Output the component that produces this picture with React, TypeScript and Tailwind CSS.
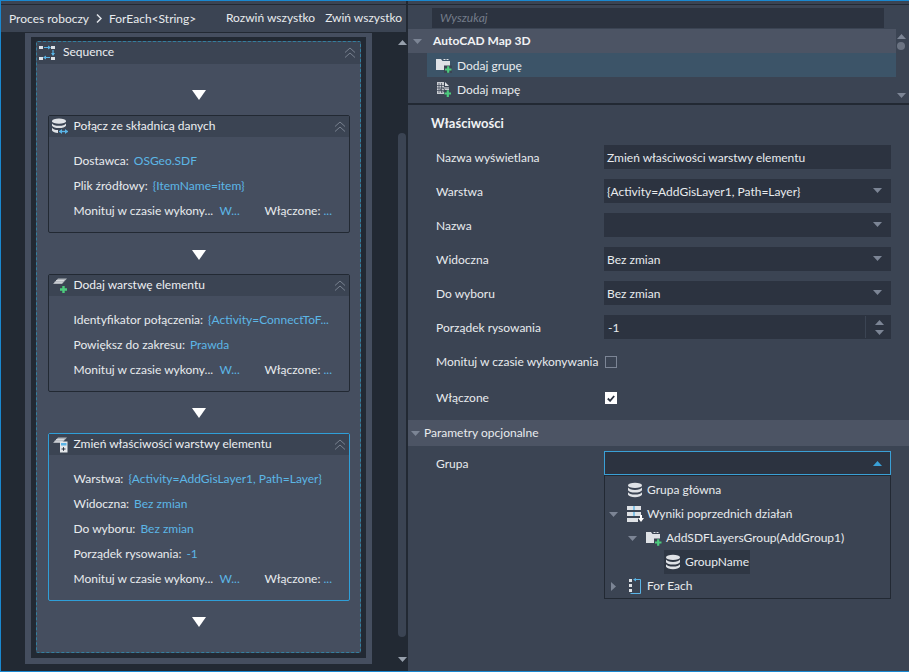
import React from "react";

const DoubleChevron = () => (
  <svg width="12" height="12" viewBox="0 0 12 12" fill="none" stroke="#78818f" strokeWidth="1">
    <path d="M1 5.5L6 1l5 4.5M1 10.5L6 6l5 4.5" />
  </svg>
);

const Down = ({ color = "#7c8595" }: { color?: string }) => (
  <svg width="9" height="5" viewBox="0 0 9 5"><path d="M0 0h9L4.5 5z" fill={color} /></svg>
);
const Up = ({ color = "#7c8595" }: { color?: string }) => (
  <svg width="9" height="5" viewBox="0 0 9 5"><path d="M0 5h9L4.5 0z" fill={color} /></svg>
);

const Flow = () => (
  <svg width="14" height="10" viewBox="0 0 14 10" className="shrink-0"><path d="M0 0h14L7 10z" fill="#fff" /></svg>
);

const SeqIcon = () => (
  <svg width="16" height="16" viewBox="0 0 16 16" className="shrink-0">
    <g fill="#dde1e6">
      <rect x="0" y="1" width="4" height="3" /><rect x="12" y="1" width="4" height="3" />
      <rect x="0" y="12" width="4" height="3" /><rect x="12" y="12" width="4" height="3" />
    </g>
    <path d="M5 2.5h5M11 12.5h-6M14 5v5" stroke="#5ab4e6" strokeWidth="1.2" fill="none" />
    <path d="M9 0.5l3 2-3 2zM7 10.5l-3 2 3 2zM12 8h4l-2 3z" fill="#5ab4e6" />
  </svg>
);

const Db = ({ w = 16 }: { w?: number }) => (
  <svg width={w} height={w} viewBox="0 0 16 16" className="shrink-0">
    <ellipse cx="8" cy="3.4" rx="7" ry="2.6" fill="#dfe2e6" />
    <path d="M1 5.6c1 1.6 3.5 2.3 7 2.3s6-.7 7-2.3v2.6c-1 1.6-3.5 2.3-7 2.3s-6-.7-7-2.3z" fill="#dfe2e6" />
    <path d="M1 10.2c1 1.6 3.5 2.3 7 2.3s6-.7 7-2.3v2.6c-1 1.7-3.5 2.4-7 2.4s-6-.7-7-2.4z" fill="#dfe2e6" />
  </svg>
);

const DbLink = () => (
  <svg width="18" height="17" viewBox="0 0 18 17" className="shrink-0">
    <ellipse cx="8" cy="3.2" rx="7" ry="2.6" fill="#dfe2e6" />
    <path d="M1 5.4c1 1.6 3.5 2.3 7 2.3s6-.7 7-2.3v2.4c-1 1.6-3.5 2.3-7 2.3s-6-.7-7-2.3z" fill="#dfe2e6" />
    <path d="M1 9.8c1 1.6 3 2.2 6 2.3v3c-3-.1-5-.9-6-2.5z" fill="#dfe2e6" />
    <path d="M8 13.5h9" stroke="#5ab4e6" strokeWidth="1.4" />
    <path d="M11 11l-3 2.5 3 2.5zM14 11l3 2.5-3 2.5z" fill="#5ab4e6" />
  </svg>
);

const Sheets = () => (
  <g>
    <path d="M2 7L7 1.500h9L11 7z" fill="#aeb3ba" />
    <path d="M5 3.500h8M3.500 5.200h8" stroke="#dfe2e6" strokeWidth=".8" />
  </g>
);

const AddLayer = () => (
  <svg width="17" height="17" viewBox="0 0 17 17" className="shrink-0">
    <Sheets />
    <path d="M9 12.5h7M12.5 9v7" stroke="#4ccb7d" strokeWidth="2.4" />
  </svg>
);

const ChangeLayer = () => (
  <svg width="17" height="17" viewBox="0 0 17 17" className="shrink-0">
    <Sheets />
    <rect x="9" y="5.5" width="7.5" height="11" fill="#e4e7ea" />
    <rect x="10" y="7" width="5.5" height="2.5" fill="#5ab4e6" />
    <path d="M10.5 13h4M12.5 11.2v3.6" stroke="#2b3240" strokeWidth="1" />
  </svg>
);

const FolderAdd = () => (
  <svg width="16" height="15" viewBox="0 0 16 15" className="shrink-0">
    <path d="M0 1h5l1.5 2H14v9H0z" fill="#dfe2e6" />
    <path d="M7.500 1h2v1h-2zM10.500 1h2v1h-2z" fill="#dfe2e6" />
    <path d="M8 7.500h8V15H8z" fill="#3b4453" />
    <path d="M9 11.500h6.500M12.200 8.200v6.600" stroke="#4ccb7d" strokeWidth="2.200" />
  </svg>
);

const MapAdd = () => (
  <svg width="14" height="15" viewBox="0 0 14 15" className="shrink-0">
    <path d="M0 0h7v5h5v7H0z" fill="#c9ccd1" />
    <path d="M8 0l4 4H8z" fill="#dfe2e6" />
    <path d="M2 1v10M4.500 1v10M0 3.500h7M0 6h12M0 8.500h12" stroke="#3b4453" strokeWidth=".7" />
    <circle cx="5.500" cy="8" r="2" fill="none" stroke="#555d6b" strokeWidth="1" />
    <rect x="7" y="8" width="7" height="7" fill="#3b4453" />
    <path d="M7.500 11.500h6.500M10.800 8.300v6.700" stroke="#4ccb7d" strokeWidth="2.200" />
  </svg>
);

const ResultsIcon = () => (
  <svg width="17" height="16" viewBox="0 0 17 16" className="shrink-0">
    <g fill="#dfe2e6">
      <rect x="0" y="0" width="14" height="4" /><rect x="0" y="6" width="14" height="4" /><rect x="0" y="12" width="11" height="4" />
    </g>
    <path d="M7 0v4M7 6v4" stroke="#5ab4e6" strokeWidth="1.400" />
    <path d="M14 9v3.500" stroke="#fff" strokeWidth="2" />
    <path d="M11 12h6l-3 4z" fill="#fff" />
  </svg>
);

const ForEachIcon = () => (
  <svg width="12" height="16" viewBox="0 0 12 16" className="shrink-0">
    <g fill="#dfe2e6"><rect x="0" y="1" width="3" height="3" /><rect x="0" y="6" width="3" height="3" /><rect x="0" y="11" width="3" height="3" /></g>
    <path d="M6 1.500h5.500V15.500H1.500" fill="none" stroke="#5ab4e6" strokeWidth="1" />
    <path d="M7 0L4 1.500 7 3.500z" fill="#5ab4e6" />
  </svg>
);

const Pair = ({ k, v }: { k: string; v: string }) => (
  <div className="flex h-[25px] items-center gap-[5px] whitespace-nowrap">
    <span>{k}</span>
    <span className="text-[#5cb6e6]">{v}</span>
  </div>
);

const Monitor = () => (
  <div className="flex h-[25px] items-center whitespace-nowrap">
    <span className="w-[146px]">Monituj w czasie wykony...</span>
    <span className="w-[45px] text-[#5cb6e6]">W...</span>
    <span className="w-[59px]">Włączone:</span>
    <span className="text-[#5cb6e6]">...</span>
  </div>
);

const Card = ({ icon, title, rows, active }: { icon: React.ReactNode; title: string; rows: [string, string][]; active?: boolean }) => (
  <div className={`w-[302px] rounded-[2px] border ${active ? "border-[#2f9fd8]" : "border-[#222933]"}`}>
    <div className="flex h-[21px] items-center bg-[#3b4453] pl-[2px] pr-[3px]">
      <div className="flex w-[23px] justify-start">{icon}</div>
      <span className="-translate-y-[1px] text-[#eceef1]">{title}</span>
      <div className="ml-auto"><DoubleChevron /></div>
    </div>
    <div className="pb-[9px] pl-[25px] pt-[11px] text-[#e8ebee]">
      {rows.map(([k, v]) => <Pair key={k} k={k} v={v} />)}
      <Monitor />
    </div>
  </div>
);

const LeftPane = () => (
  <div className="flex h-full w-[405px] shrink-0 flex-col">
    <div className="h-[3px] bg-[#3b4453]" />
    <div className="flex h-[29px] items-center border-y border-[#222933] bg-[#3b4453] pl-[8px] pr-[4px] text-[#e8ebee]">
      <span>Proces roboczy</span>
      <svg width="6" height="9" viewBox="0 0 6 9" className="mx-[7px]"><path d="M1 .5l4 4-4 4" fill="none" stroke="#e2e5ea" strokeWidth="1.500" /></svg>
      <span>ForEach&lt;String&gt;</span>
      <span className="ml-auto mr-[10px] -translate-y-[1px]">Rozwiń wszystko</span>
      <span className="-translate-y-[1px]">Zwiń wszystko</span>
    </div>
    <div className="flex flex-1 bg-[#222933] pl-[24px]">
      <div className="mb-[7px] w-[347px] bg-[#454e5f] px-[6px] pb-[6px] pt-[4px]">
        <div className="h-full bg-[#222933] p-[5px] pt-[4px]">
          <div className="flex h-full flex-col rounded-[2px] border border-dashed border-[#327f9f] bg-[#454e5f]">
            <div className="flex h-[22px] shrink-0 items-center bg-[#3b4453] pl-[2px] pr-[4px]">
              <div className="w-[24px]"><SeqIcon /></div>
              <span className="-translate-y-[1px] text-[#eceef1]">Sequence</span>
              <div className="ml-auto"><DoubleChevron /></div>
            </div>
            <div className="flex flex-col items-center pt-[26px]">
              <Flow />
              <div className="mt-[15px]">
                <Card icon={<DbLink />} title="Połącz ze składnicą danych" rows={[["Dostawca:", "OSGeo.SDF"], ["Plik źródłowy:", "{ItemName=item}"]]} />
              </div>
              <div className="mt-[17px]"><Flow /></div>
              <div className="mt-[14px]">
                <Card icon={<AddLayer />} title="Dodaj warstwę elementu" rows={[["Identyfikator połączenia:", "{Activity=ConnectToF..."], ["Powiększ do zakresu:", "Prawda"]]} />
              </div>
              <div className="mt-[16px]"><Flow /></div>
              <div className="mt-[15px]">
                <Card active icon={<ChangeLayer />} title="Zmień właściwości warstwy elementu" rows={[["Warstwa:", "{Activity=AddGisLayer1, Path=Layer}"], ["Widoczna:", "Bez zmian"], ["Do wyboru:", "Bez zmian"], ["Porządek rysowania:", "-1"]]} />
              </div>
              <div className="mt-[16px]"><Flow /></div>
            </div>
          </div>
        </div>
      </div>
      <div className="ml-auto flex w-[8px] flex-col items-center pb-[9px] pt-[7px]">
        <Up color="#97a0ac" />
        <div className="mb-[20px] mt-[88px] w-[8px] flex-1 rounded-full bg-[#3b4453]" />
        <Down color="#97a0ac" />
      </div>
    </div>
  </div>
);

const Field = ({ label, children }: { label: string; children: React.ReactNode }) => (
  <div className="mb-[10px] flex h-[24px] items-center">
    <span className="w-[168px] translate-y-px whitespace-nowrap">{label}</span>
    {children}
  </div>
);

const Select = ({ value }: { value?: string }) => (
  <div className="flex h-[24px] w-[287px] items-center bg-[#2c3340] pl-[3px] pr-[9px]">
    <span className="translate-y-px">{value}</span>
    <div className="ml-auto -translate-y-[1px]"><Down /></div>
  </div>
);

const TreeRow = ({ indent, arrow, icon, label, hl, iconW = "w-[20px]" }: { indent: number; arrow?: "down" | "right"; icon: React.ReactNode; label: string; hl?: boolean; iconW?: string }) => (
  <div className="flex h-[24px] items-center" style={{ paddingLeft: indent }}>
    <div className="flex w-[17px] shrink-0 items-center">
      {arrow === "down" && <Down />}
      {arrow === "right" && <svg width="5" height="9" viewBox="0 0 5 9"><path d="M0 0v9l5-4.500z" fill="#7c8595" /></svg>}
    </div>
    <div className={`flex h-[24px] items-center pl-[1px] pr-px ${hl ? "bg-[#2f3744]" : ""}`}>
      <div className={`flex shrink-0 items-center ${iconW}`}>{icon}</div>
      <span className="whitespace-nowrap">{label}</span>
    </div>
  </div>
);

const RightPane = () => (
  <div className="ml-[1px] flex h-full flex-1 flex-col border-l border-[#222933] bg-[#3b4453] text-[#e8ebee]">
    <div className="h-[3px]" />
    <div className="border-t border-[#222933]" />
    <div className="ml-[24px] mt-[3px] flex h-[20px] w-[452px] items-center bg-[#2c3340] pl-[8px] italic text-[#747c8a]">Wyszukaj</div>
    <div className="relative mt-[1px] h-[74px] pr-[13px]">
      <div className="flex h-[24px] items-center bg-[#4c5464] pl-[5px] font-bold text-[#f0f2f4]">
        <Down /><span className="ml-[11px]">AutoCAD Map 3D</span>
      </div>
      <div className="ml-[19px] flex h-[24px] items-center gap-[5px] bg-[#3c5468] pl-[9px]"><FolderAdd /><span className="translate-y-px">Dodaj grupę</span></div>
      <div className="ml-[19px] flex h-[24px] items-center gap-[6px] pl-[10px]"><MapAdd /><span className="translate-y-px">Dodaj mapę</span></div>
      <div className="absolute bottom-[5px] right-[4px] top-[5px] flex w-[8px] flex-col items-center">
        <Up />
        <div className="mt-[3px] h-[8px] w-[8px] rounded-full bg-[#6b7382]" />
        <div className="mt-auto"><Down /></div>
      </div>
    </div>
    <div className="border-t-2 border-[#222933]" />
    <div className="pl-[23px] pt-[9px] text-[13px] font-bold leading-[18px] text-[#f0f2f4]">Właściwości</div>
    <div className="pl-[28px] pt-[13px]">
      <Field label="Nazwa wyświetlana">
        <div className="flex h-[24px] w-[287px] items-center bg-[#2c3340] pl-[3px]"><span className="translate-y-px">Zmień właściwości warstwy elementu</span></div>
      </Field>
      <Field label="Warstwa"><Select value="{Activity=AddGisLayer1, Path=Layer}" /></Field>
      <Field label="Nazwa"><Select /></Field>
      <Field label="Widoczna"><Select value="Bez zmian" /></Field>
      <Field label="Do wyboru"><Select value="Bez zmian" /></Field>
      <Field label="Porządek rysowania">
        <div className="flex h-[24px] w-[287px] items-center bg-[#2c3340] pl-[4px]">
          <span className="translate-y-px">-1</span>
          <div className="ml-auto mr-[7px] flex h-[22px] w-[19px] flex-col items-end justify-center gap-[5px] border-l border-[#3b4453]">
            <Up /><Down />
          </div>
        </div>
      </Field>
      <div className="mb-[12px] mt-[11px] flex h-[24px] items-center">
        <span className="w-[169px] whitespace-nowrap">Monituj w czasie wykonywania</span>
        <div className="h-[12px] w-[12px] border border-[#7c8595]" />
      </div>
      <div className="flex h-[24px] items-center">
        <span className="w-[169px]">Włączone</span>
        <div className="flex h-[12px] w-[12px] items-center justify-center bg-white">
          <svg width="8" height="7" viewBox="0 0 8 7"><path d="M.8 3.500l2.300 2.300L7.200 1" fill="none" stroke="#2c3340" strokeWidth="1.800" /></svg>
        </div>
      </div>
    </div>
    <div className="mt-[10px] flex h-[26px] items-center bg-[#4c5464] pl-[3px]">
      <Down /><span className="ml-[4px]">Parametry opcjonalne</span>
    </div>
    <div className="flex pl-[28px] pt-[5px]">
      <div className="flex h-[24px] w-[168px] translate-y-px items-center">Grupa</div>
      <div className="w-[287px]">
        <div className="flex h-[24px] items-center border border-[#3aa0d6] bg-[#2c3340] pr-[8px]">
          <div className="ml-auto"><Up color="#3aa0d6" /></div>
        </div>
        <div className="h-[124px] border border-[#222933] bg-[#3b4453] pl-[4px] pt-[2px]">
          <TreeRow indent={0} icon={<Db />} label="Grupa główna" />
          <TreeRow indent={0} arrow="down" icon={<ResultsIcon />} label="Wyniki poprzednich działań" />
          <TreeRow indent={19} arrow="down" icon={<FolderAdd />} label="AddSDFLayersGroup(AddGroup1)" />
          <TreeRow indent={38} icon={<Db />} label="GroupName" hl />
          <TreeRow indent={2} arrow="right" icon={<ForEachIcon />} label="For Each" iconW="w-[18px]" />
        </div>
      </div>
    </div>
  </div>
);

export default function App() {
  return (
    <div className="flex h-[672px] w-[909px] overflow-hidden border-y border-l border-[#1a88d0] bg-[#222933] text-[12px] leading-[16px]" style={{ fontFamily: 'Lato, sans-serif' }}>
      <LeftPane />
      <RightPane />
    </div>
  );
}
